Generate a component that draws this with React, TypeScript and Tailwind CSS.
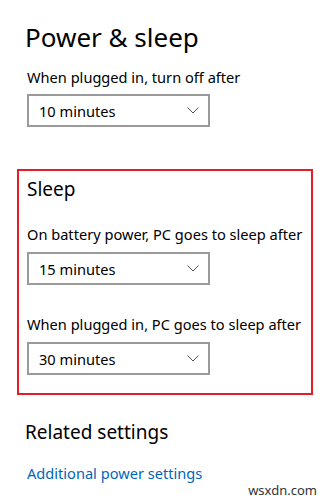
import React from "react";

const Chevron = () => (
  <svg width="12" height="7" viewBox="0 0 12 7" fill="none">
    <path d="M0.5 0.5 L6 6 L11.5 0.5" stroke="#555" strokeWidth="1" />
  </svg>
);

const Dropdown = ({ value, className = "" }: { value: string; className?: string }) => (
  <div
    className={`flex h-[33px] w-[183px] items-center justify-between border-2 border-[#9a9a9a] pl-[10px] pr-[9px] ${className}`}
  >
    <span className="text-[14.6px] leading-[20px] text-black">{value}</span>
    <Chevron />
  </div>
);

export default function App() {
  return (
    <div
      className="relative h-[500px] w-[329px] overflow-hidden bg-white text-black"
      style={{ fontFamily: '"Noto Sans", "Open Sans", sans-serif' }}
    >
      {/* header */}
      <div className="pl-[25px] pt-[19px]">
        <h1 className="text-[26px] font-normal leading-[36px]">Power &amp; sleep</h1>
        <p className="mt-[12px] pl-[2px] text-[14.6px] leading-[20px]">When plugged in, turn off after</p>
        <Dropdown value="10 minutes" className="ml-[2px] mt-[7px]" />
      </div>

      {/* sleep section */}
      <div className="ml-[17px] mt-[42px] w-[296px] border-2 border-[#e81c24] pb-[18px] pl-[8px] pt-[4px]">
        <h2 className="text-[19px] font-normal leading-[28px]">Sleep</h2>
        <p className="mt-[21px] text-[14.6px] leading-[20px]">On battery power, PC goes to sleep after</p>
        <Dropdown value="15 minutes" className="mt-[8px]" />
        <p className="mt-[29px] text-[14.6px] leading-[20px]">When plugged in, PC goes to sleep after</p>
        <Dropdown value="30 minutes" className="mt-[8px]" />
      </div>

      {/* related */}
      <div className="pl-[25px]">
        <h2 className="mt-[23px] text-[19px] font-normal leading-[28px]">Related settings</h2>
        <a className="mt-[17px] block pl-[2px] text-[14.6px] leading-[20px] text-[#0067b8]">
          Additional power settings
        </a>
      </div>

      <span className="absolute bottom-[2px] right-[12px] text-[13px] leading-[16px] text-[#333]">
        wsxdn.com
      </span>
    </div>
  );
}
